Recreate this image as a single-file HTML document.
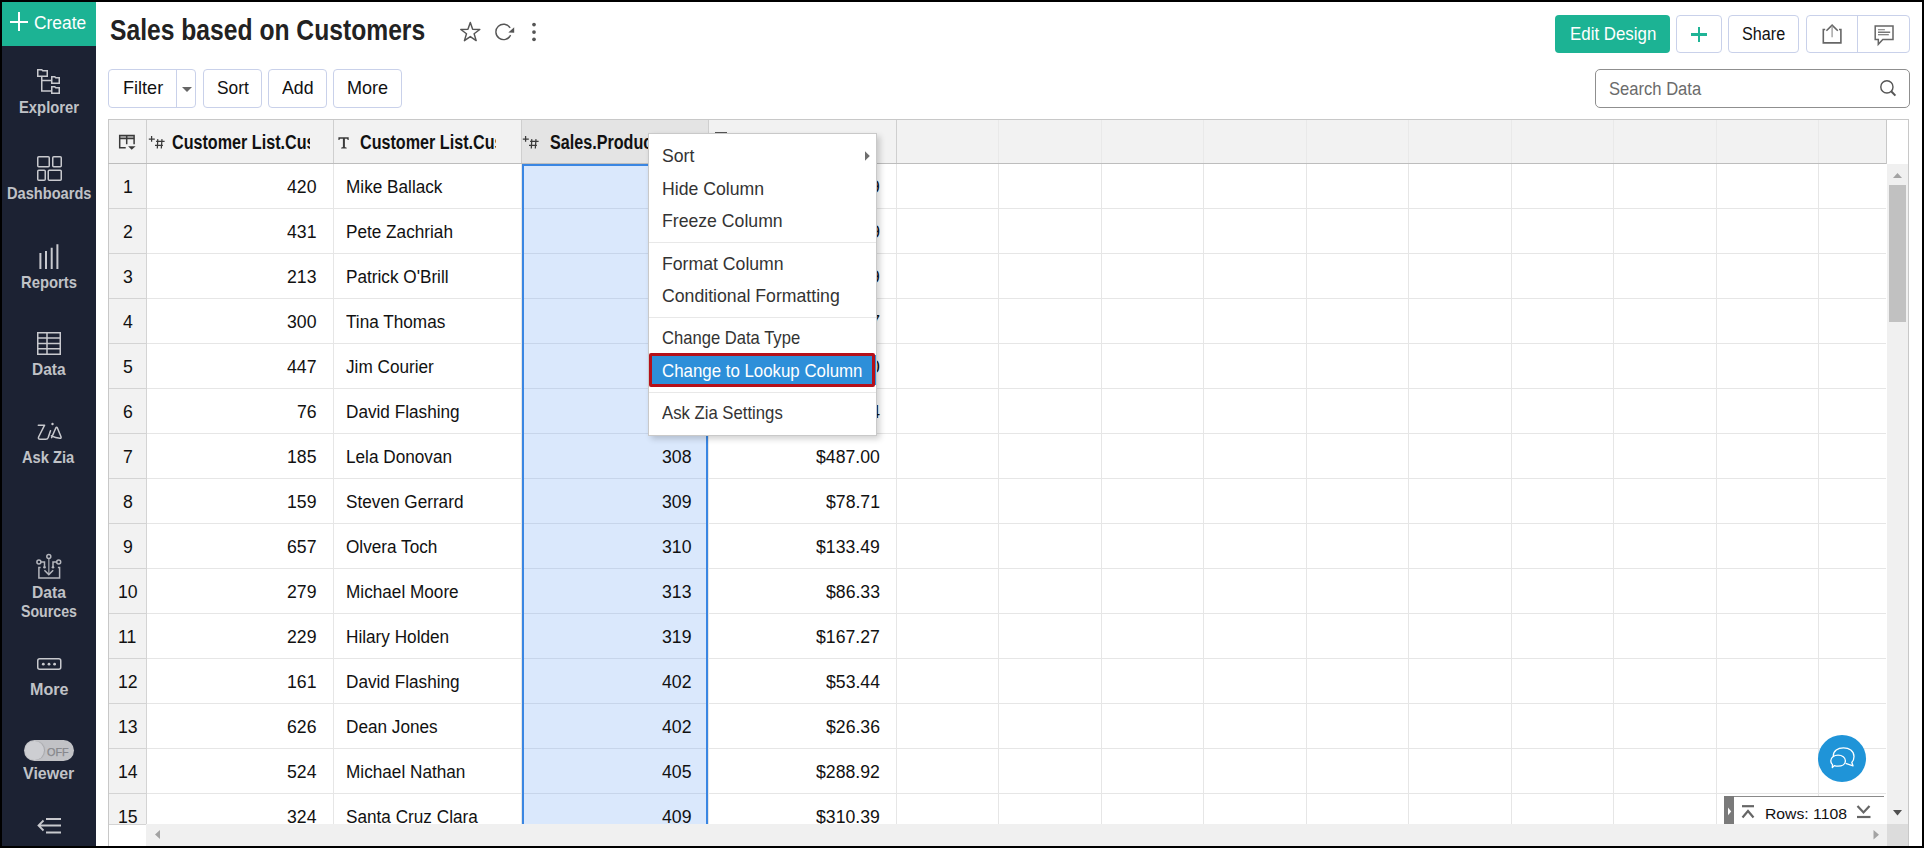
<!DOCTYPE html><html><head><meta charset="utf-8"><style>
html,body{margin:0;padding:0;}body{width:1924px;height:848px;position:relative;overflow:hidden;background:#fff;font-family:"Liberation Sans",sans-serif;}
.t{position:absolute;white-space:nowrap;transform-origin:0 0;}
</style></head><body>
<div style="position:absolute;left:0px;top:0px;width:96px;height:848px;background:#1c2233"></div>
<div style="position:absolute;left:2px;top:2px;width:94px;height:44px;background:#1cb394"></div>
<div style="position:absolute;left:10px;top:20.5px;width:18px;height:2px;background:#fff"></div>
<div style="position:absolute;left:18px;top:12px;width:2px;height:19px;background:#fff"></div>
<div class="t" style="left:33.60px;top:13.50px;font-size:18.90px;line-height:18.90px;color:#fff;transform:scaleX(0.9201);">Create</div>
<div class="t" style="left:18.90px;top:99.61px;font-size:15.70px;line-height:15.70px;color:#c0c2c7;font-weight:bold;transform:scaleX(0.9436);">Explorer</div>
<div class="t" style="left:6.80px;top:186.41px;font-size:15.70px;line-height:15.70px;color:#c0c2c7;font-weight:bold;transform:scaleX(0.9313);">Dashboards</div>
<div class="t" style="left:21.00px;top:274.91px;font-size:15.70px;line-height:15.70px;color:#c0c2c7;font-weight:bold;transform:scaleX(0.9444);">Reports</div>
<div class="t" style="left:32.00px;top:361.51px;font-size:15.70px;line-height:15.70px;color:#c0c2c7;font-weight:bold;transform:scaleX(0.9870);">Data</div>
<div class="t" style="left:22.30px;top:449.61px;font-size:15.70px;line-height:15.70px;color:#c0c2c7;font-weight:bold;transform:scaleX(0.9370);">Ask Zia</div>
<div class="t" style="left:32.00px;top:584.91px;font-size:15.70px;line-height:15.70px;color:#c0c2c7;font-weight:bold;transform:scaleX(0.9958);">Data</div>
<div class="t" style="left:21.00px;top:603.81px;font-size:15.70px;line-height:15.70px;color:#c0c2c7;font-weight:bold;transform:scaleX(0.9037);">Sources</div>
<div class="t" style="left:29.80px;top:681.61px;font-size:15.70px;line-height:15.70px;color:#c0c2c7;font-weight:bold;transform:scaleX(1.0262);">More</div>
<div class="t" style="left:23.40px;top:765.81px;font-size:15.70px;line-height:15.70px;color:#c0c2c7;font-weight:bold;transform:scaleX(1.0197);">Viewer</div>
<svg style="position:absolute;left:30px;top:60px;" width="40" height="40" viewBox="0 0 40 40"><g fill="none" stroke="#c8c9ce" stroke-width="1.5"><path d="M7.75 9.75h4l1 1h4.5v5.5h-9.5z"/><path d="M21.75 16.75h3l1 1h3.5v5.5h-7.5z"/><path d="M21.75 26.75h3l1 1h3.5v5.5h-7.5z"/><path d="M11.75 16.5v14.5h10M11.75 20.5h10"/></g></svg>
<svg style="position:absolute;left:30px;top:150px;" width="40" height="40" viewBox="0 0 40 40"><g fill="none" stroke="#c8c9ce" stroke-width="1.5"><rect x="7.75" y="6.75" width="11.5" height="10" rx="1"/><rect x="22.75" y="6.75" width="8.5" height="10" rx="1"/><rect x="7.75" y="20.25" width="7.5" height="10" rx="1"/><rect x="18.25" y="20.25" width="13" height="10" rx="1"/></g></svg>
<svg style="position:absolute;left:30px;top:236px;" width="40" height="40" viewBox="0 0 40 40"><g fill="none" stroke="#c8c9ce" stroke-width="2"><path d="M10.4 17v16M16 15v18M21.7 11.7v21.3M27.4 8.2v24.8"/></g></svg>
<svg style="position:absolute;left:30px;top:325px;" width="40" height="40" viewBox="0 0 40 40"><g fill="none" stroke="#c8c9ce" stroke-width="1.5"><rect x="7.75" y="7.75" width="22.5" height="21.5"/><path d="M17 7.75v21.5M7.75 13h22.5M7.75 18.5h22.5M7.75 23.75h22.5"/></g></svg>
<svg style="position:absolute;left:30px;top:415px;" width="40" height="40" viewBox="0 0 40 40"><g fill="none" stroke="#c8c9ce" stroke-width="1.5" stroke-linejoin="round" stroke-linecap="round"><path d="M8.3 10.2h6.3L8.6 22q-0.8 2.2 1.5 2.3h5.8q1.6 0 2.3-1.8l2.3-6.8"/><path d="M21.6 22.6l4.2-9.6q0.8-1.3 1.6 0l3.6 8.8q0.5 1.6-1.2 1.5q-4.2-0.4-8.4-2.4"/></g><circle cx="22.5" cy="9" r="1.2" fill="#c8c9ce"/></svg>
<svg style="position:absolute;left:30px;top:548px;" width="40" height="40" viewBox="0 0 40 40"><g fill="none" stroke="#b4b6bd" stroke-width="1.5"><path d="M10.6 19.6H8.9V30.1H29.6V19.6H27.9"/><path d="M18.8 10.6V26.4" stroke="#8d9099"/><path d="M14.4 22.3l4.4 4.3 4.4-4.3"/><circle cx="18.8" cy="8.6" r="2"/><circle cx="8.9" cy="14" r="2"/><circle cx="28.7" cy="14" r="2"/><path d="M10.9 14H14.5V18.8M26.7 14H23V18.8"/></g><circle cx="14.5" cy="19.3" r="1.3" fill="#b4b6bd"/><circle cx="23" cy="19.3" r="1.3" fill="#b4b6bd"/></svg>
<svg style="position:absolute;left:30px;top:650px;" width="40" height="40" viewBox="0 0 40 40"><g fill="none" stroke="#c8c9ce" stroke-width="1.5"><rect x="7.75" y="8.75" width="23" height="10.5" rx="2"/></g><circle cx="13.3" cy="14.2" r="1.4" fill="#c8c9ce"/><circle cx="19" cy="14.2" r="1.4" fill="#c8c9ce"/><circle cx="24.6" cy="14.2" r="1.4" fill="#c8c9ce"/></svg>
<div style="position:absolute;left:24px;top:740px;width:50px;height:20.5px;background:#c1c2c6;border-radius:11px"></div>
<div style="position:absolute;left:24.5px;top:740.5px;width:19px;height:19.5px;background:#cdced2;border-radius:50%;box-shadow:1px 0 1px rgba(0,0,0,0.15)"></div>
<div class="t" style="left:46.50px;top:746.97px;font-size:10.90px;line-height:10.90px;color:#86878c;transform:scaleX(0.9953);-webkit-text-stroke:0.25px #86878c;">OFF</div>
<svg style="position:absolute;left:30px;top:810px;" width="40" height="30" viewBox="0 0 40 30"><g fill="none" stroke="#c8c9ce" stroke-width="1.8"><path d="M16 9h15M9 15.5h22M16 22.5h15M13.5 10.5l-5 5 5 5"/></g></svg>
<div class="t" style="left:110.00px;top:14.95px;font-size:29.94px;line-height:29.94px;color:#222;font-weight:bold;transform:scaleX(0.8236);">Sales based on Customers</div>
<svg style="position:absolute;left:456px;top:18px;" width="30" height="28" viewBox="0 0 30 28"><path d="M14.30 4.55 L16.65 11.31 L23.81 11.46 L18.10 15.79 L20.18 22.64 L14.30 18.55 L8.42 22.64 L10.50 15.79 L4.79 11.46 L11.95 11.31z" fill="none" stroke="#555" stroke-width="1.45" stroke-linejoin="round"/></svg>
<svg style="position:absolute;left:490px;top:18px;" width="30" height="28" viewBox="0 0 30 28"><path d="M20.58 17.15A7.7 7.7 0 1 1 20.13 9.82" fill="none" stroke="#555" stroke-width="1.4"/><path d="M18.3 14.5L24.2 9.2V14.8z" fill="#555"/></svg>
<svg style="position:absolute;left:528px;top:20px;" width="12" height="24" viewBox="0 0 12 24"><circle cx="6" cy="4.6" r="1.85" fill="#555"/><circle cx="6" cy="12.1" r="1.85" fill="#555"/><circle cx="6" cy="19.3" r="1.85" fill="#555"/></svg>
<div style="position:absolute;left:1555px;top:15px;width:115px;height:38px;background:#1cb394;border-radius:4px;box-sizing:border-box"></div>
<div class="t" style="left:1569.80px;top:24.97px;font-size:18.46px;line-height:18.46px;color:#fff;transform:scaleX(0.9151);">Edit Design</div>
<div style="position:absolute;left:1676px;top:15px;width:46px;height:38px;border:1px solid #c9d1ea;border-radius:4px;box-sizing:border-box"></div>
<div style="position:absolute;left:1691px;top:33.3px;width:16px;height:2.4px;background:#1fb496"></div>
<div style="position:absolute;left:1697.8px;top:26.8px;width:2.4px;height:15px;background:#1fb496"></div>
<div style="position:absolute;left:1728px;top:15px;width:71px;height:38px;border:1px solid #c9d1ea;border-radius:4px;box-sizing:border-box"></div>
<div class="t" style="left:1742.10px;top:24.82px;font-size:18.75px;line-height:18.75px;color:#111;transform:scaleX(0.8637);">Share</div>
<div style="position:absolute;left:1806px;top:15px;width:104px;height:38px;border:1px solid #c9d1ea;border-radius:4px;box-sizing:border-box"></div>
<div style="position:absolute;left:1857px;top:15px;width:1px;height:38px;background:#c9d1ea"></div>
<svg style="position:absolute;left:1818px;top:20px;" width="28" height="28" viewBox="0 0 28 28"><g fill="none" stroke="#666" stroke-width="1.6"><path d="M7.2 9.5H5.3V22.9H22.9V9.5H21"/><path d="M8.4 10.8l5.7-5.6 5.7 5.6"/></g><path d="M14.1 5.8V17.3" stroke="#9a9a9a" stroke-width="1.3"/></svg>
<svg style="position:absolute;left:1870px;top:20px;" width="28" height="28" viewBox="0 0 28 28"><path d="M5.2 6.1H23V19.4H12.8L8.3 24.3V19.4H5.2z" fill="none" stroke="#666" stroke-width="1.5"/><path d="M8 9.7h6.9" stroke="#8a8a8a" stroke-width="1.2"/><path d="M8 12.2h12.2" stroke="#555" stroke-width="1.2"/><path d="M8 14.7h10.8" stroke="#777" stroke-width="1.2"/></svg>
<div style="position:absolute;left:108px;top:69px;width:88px;height:39px;border:1px solid #c9d1ea;border-radius:4px;box-sizing:border-box"></div>
<div class="t" style="left:122.60px;top:78.65px;font-size:18.60px;line-height:18.60px;color:#111;transform:scaleX(0.9722);">Filter</div>
<div style="position:absolute;left:176px;top:69px;width:1px;height:39px;background:#c9d1ea"></div>
<svg style="position:absolute;left:180px;top:84px;" width="14" height="10" viewBox="0 0 14 10"><path d="M2 3h10l-5 5z" fill="#666"/></svg>
<div style="position:absolute;left:203px;top:69px;width:59px;height:39px;border:1px solid #c9d1ea;border-radius:4px;box-sizing:border-box"></div>
<div class="t" style="left:216.80px;top:78.65px;font-size:18.60px;line-height:18.60px;color:#111;transform:scaleX(0.9315);">Sort</div>
<div style="position:absolute;left:268px;top:69px;width:59px;height:39px;border:1px solid #c9d1ea;border-radius:4px;box-sizing:border-box"></div>
<div class="t" style="left:282.00px;top:78.65px;font-size:18.60px;line-height:18.60px;color:#111;transform:scaleX(0.9512);">Add</div>
<div style="position:absolute;left:333px;top:69px;width:69px;height:39px;border:1px solid #c9d1ea;border-radius:4px;box-sizing:border-box"></div>
<div class="t" style="left:347.30px;top:78.65px;font-size:18.60px;line-height:18.60px;color:#111;transform:scaleX(0.9700);">More</div>
<div style="position:absolute;left:1595px;top:69px;width:315px;height:39px;border:1px solid #8f8f8f;border-radius:5px;box-sizing:border-box"></div>
<div class="t" style="left:1608.90px;top:79.87px;font-size:18.46px;line-height:18.46px;color:#6b6b6b;transform:scaleX(0.8993);">Search Data</div>
<svg style="position:absolute;left:1876px;top:76px;" width="24" height="24" viewBox="0 0 24 24"><circle cx="10.9" cy="10.9" r="6.1" fill="none" stroke="#555" stroke-width="1.4"/><path d="M15.2 15.2l4.2 4.4" stroke="#555" stroke-width="2"/></svg>
<div style="position:absolute;left:109px;top:120px;width:1777px;height:43px;background:#f2f2f2"></div>
<div style="position:absolute;left:522px;top:120px;width:186px;height:43px;background:#e4e4e4"></div>
<div style="position:absolute;left:108px;top:119px;width:1801px;height:1px;background:#c8c8c8"></div>
<div style="position:absolute;left:108px;top:119px;width:1px;height:729px;background:#c8c8c8"></div>
<div style="position:absolute;left:1908px;top:119px;width:1px;height:705px;background:#c8c8c8"></div>
<div style="position:absolute;left:108px;top:163px;width:1778px;height:1px;background:#bdbdbd"></div>
<div style="position:absolute;left:1886px;top:119px;width:1px;height:45px;background:#c8c8c8"></div>
<div style="position:absolute;left:109px;top:164px;width:37px;height:660px;background:#f2f2f2"></div>
<div style="position:absolute;left:522px;top:164px;width:186px;height:660px;background:#dae8fc"></div>
<div style="position:absolute;left:109px;top:208px;width:1777px;height:1px;background:#e6e6e6"></div>
<div style="position:absolute;left:109px;top:208px;width:37px;height:1px;background:#d4d4d4"></div>
<div style="position:absolute;left:524px;top:208px;width:182px;height:1px;background:#c7d5ea"></div>
<div style="position:absolute;left:109px;top:253px;width:1777px;height:1px;background:#e6e6e6"></div>
<div style="position:absolute;left:109px;top:253px;width:37px;height:1px;background:#d4d4d4"></div>
<div style="position:absolute;left:524px;top:253px;width:182px;height:1px;background:#c7d5ea"></div>
<div style="position:absolute;left:109px;top:298px;width:1777px;height:1px;background:#e6e6e6"></div>
<div style="position:absolute;left:109px;top:298px;width:37px;height:1px;background:#d4d4d4"></div>
<div style="position:absolute;left:524px;top:298px;width:182px;height:1px;background:#c7d5ea"></div>
<div style="position:absolute;left:109px;top:343px;width:1777px;height:1px;background:#e6e6e6"></div>
<div style="position:absolute;left:109px;top:343px;width:37px;height:1px;background:#d4d4d4"></div>
<div style="position:absolute;left:524px;top:343px;width:182px;height:1px;background:#c7d5ea"></div>
<div style="position:absolute;left:109px;top:388px;width:1777px;height:1px;background:#e6e6e6"></div>
<div style="position:absolute;left:109px;top:388px;width:37px;height:1px;background:#d4d4d4"></div>
<div style="position:absolute;left:524px;top:388px;width:182px;height:1px;background:#c7d5ea"></div>
<div style="position:absolute;left:109px;top:433px;width:1777px;height:1px;background:#e6e6e6"></div>
<div style="position:absolute;left:109px;top:433px;width:37px;height:1px;background:#d4d4d4"></div>
<div style="position:absolute;left:524px;top:433px;width:182px;height:1px;background:#c7d5ea"></div>
<div style="position:absolute;left:109px;top:478px;width:1777px;height:1px;background:#e6e6e6"></div>
<div style="position:absolute;left:109px;top:478px;width:37px;height:1px;background:#d4d4d4"></div>
<div style="position:absolute;left:524px;top:478px;width:182px;height:1px;background:#c7d5ea"></div>
<div style="position:absolute;left:109px;top:523px;width:1777px;height:1px;background:#e6e6e6"></div>
<div style="position:absolute;left:109px;top:523px;width:37px;height:1px;background:#d4d4d4"></div>
<div style="position:absolute;left:524px;top:523px;width:182px;height:1px;background:#c7d5ea"></div>
<div style="position:absolute;left:109px;top:568px;width:1777px;height:1px;background:#e6e6e6"></div>
<div style="position:absolute;left:109px;top:568px;width:37px;height:1px;background:#d4d4d4"></div>
<div style="position:absolute;left:524px;top:568px;width:182px;height:1px;background:#c7d5ea"></div>
<div style="position:absolute;left:109px;top:613px;width:1777px;height:1px;background:#e6e6e6"></div>
<div style="position:absolute;left:109px;top:613px;width:37px;height:1px;background:#d4d4d4"></div>
<div style="position:absolute;left:524px;top:613px;width:182px;height:1px;background:#c7d5ea"></div>
<div style="position:absolute;left:109px;top:658px;width:1777px;height:1px;background:#e6e6e6"></div>
<div style="position:absolute;left:109px;top:658px;width:37px;height:1px;background:#d4d4d4"></div>
<div style="position:absolute;left:524px;top:658px;width:182px;height:1px;background:#c7d5ea"></div>
<div style="position:absolute;left:109px;top:703px;width:1777px;height:1px;background:#e6e6e6"></div>
<div style="position:absolute;left:109px;top:703px;width:37px;height:1px;background:#d4d4d4"></div>
<div style="position:absolute;left:524px;top:703px;width:182px;height:1px;background:#c7d5ea"></div>
<div style="position:absolute;left:109px;top:748px;width:1777px;height:1px;background:#e6e6e6"></div>
<div style="position:absolute;left:109px;top:748px;width:37px;height:1px;background:#d4d4d4"></div>
<div style="position:absolute;left:524px;top:748px;width:182px;height:1px;background:#c7d5ea"></div>
<div style="position:absolute;left:109px;top:793px;width:1777px;height:1px;background:#e6e6e6"></div>
<div style="position:absolute;left:109px;top:793px;width:37px;height:1px;background:#d4d4d4"></div>
<div style="position:absolute;left:524px;top:793px;width:182px;height:1px;background:#c7d5ea"></div>
<div style="position:absolute;left:109px;top:824px;width:37px;height:1px;background:#d4d4d4"></div>
<div style="position:absolute;left:146px;top:120px;width:1px;height:43px;background:#cfcfcf"></div>
<div style="position:absolute;left:333px;top:120px;width:1px;height:43px;background:#cfcfcf"></div>
<div style="position:absolute;left:521px;top:120px;width:1px;height:43px;background:#cfcfcf"></div>
<div style="position:absolute;left:708px;top:120px;width:1px;height:43px;background:#cfcfcf"></div>
<div style="position:absolute;left:896px;top:120px;width:1px;height:43px;background:#cfcfcf"></div>
<div style="position:absolute;left:998px;top:120px;width:1px;height:43px;background:#e9e9e9"></div>
<div style="position:absolute;left:1101px;top:120px;width:1px;height:43px;background:#e9e9e9"></div>
<div style="position:absolute;left:1203px;top:120px;width:1px;height:43px;background:#e9e9e9"></div>
<div style="position:absolute;left:1306px;top:120px;width:1px;height:43px;background:#e9e9e9"></div>
<div style="position:absolute;left:1408px;top:120px;width:1px;height:43px;background:#e9e9e9"></div>
<div style="position:absolute;left:1511px;top:120px;width:1px;height:43px;background:#e9e9e9"></div>
<div style="position:absolute;left:1613px;top:120px;width:1px;height:43px;background:#e9e9e9"></div>
<div style="position:absolute;left:1716px;top:120px;width:1px;height:43px;background:#e9e9e9"></div>
<div style="position:absolute;left:1818px;top:120px;width:1px;height:43px;background:#e9e9e9"></div>
<div style="position:absolute;left:146px;top:164px;width:1px;height:660px;background:#d4d4d4"></div>
<div style="position:absolute;left:333px;top:164px;width:1px;height:660px;background:#e6e6e6"></div>
<div style="position:absolute;left:521px;top:164px;width:1px;height:660px;background:#e6e6e6"></div>
<div style="position:absolute;left:708px;top:164px;width:1px;height:660px;background:#e6e6e6"></div>
<div style="position:absolute;left:896px;top:164px;width:1px;height:660px;background:#e6e6e6"></div>
<div style="position:absolute;left:998px;top:164px;width:1px;height:660px;background:#e6e6e6"></div>
<div style="position:absolute;left:1101px;top:164px;width:1px;height:660px;background:#e6e6e6"></div>
<div style="position:absolute;left:1203px;top:164px;width:1px;height:660px;background:#e6e6e6"></div>
<div style="position:absolute;left:1306px;top:164px;width:1px;height:660px;background:#e6e6e6"></div>
<div style="position:absolute;left:1408px;top:164px;width:1px;height:660px;background:#e6e6e6"></div>
<div style="position:absolute;left:1511px;top:164px;width:1px;height:660px;background:#e6e6e6"></div>
<div style="position:absolute;left:1613px;top:164px;width:1px;height:660px;background:#e6e6e6"></div>
<div style="position:absolute;left:1716px;top:164px;width:1px;height:660px;background:#e6e6e6"></div>
<div style="position:absolute;left:1818px;top:164px;width:1px;height:660px;background:#e6e6e6"></div>
<div style="position:absolute;left:522px;top:164px;width:186px;height:2px;background:#3a86e2"></div>
<div style="position:absolute;left:522px;top:164px;width:2px;height:660px;background:#3a86e2"></div>
<div style="position:absolute;left:706px;top:164px;width:2px;height:660px;background:#3a86e2"></div>
<svg style="position:absolute;left:115px;top:130px;" width="24" height="24" viewBox="0 0 24 24"><rect x="4.7" y="5.4" width="14.4" height="3" fill="#bbb"/><g fill="none" stroke="#3a3a3a" stroke-width="1.5"><path d="M4.7 18.5V5.4H19.1V14.2M4.7 8.4H19.1M11.7 5.4V14.2M4.7 17.8H10.7"/></g><path d="M13.1 16.2h7.5l-3.9 3.5z" fill="#3a3a3a"/></svg>
<svg style="position:absolute;left:148px;top:133px;" width="20" height="20" viewBox="0 0 20 20"><g stroke="#3a3a3a" stroke-width="1.25" fill="none"><path d="M0.8 6.1h6M3.6 3v5.7"/><path d="M8.1 8.4h8.5M7 12.4h7.9M9.8 6.1l-0.5 9.4M14 6.1l-0.7 9.4"/></g></svg>
<svg style="position:absolute;left:336px;top:133px;" width="16" height="20" viewBox="0 0 16 20"><path d="M2.4 4.3h10.3v2.8h-0.9l-0.8-1.4H8.9v8.4l1.8 0.6v0.8H5.1v-0.8l1.8-0.6V5.7H4.1l-0.8 1.4H2.4z" fill="#3a3a3a"/></svg>
<svg style="position:absolute;left:522px;top:133px;" width="20" height="20" viewBox="0 0 20 20"><g stroke="#3a3a3a" stroke-width="1.25" fill="none"><path d="M0.8 6.1h6M3.6 3v5.7"/><path d="M8.1 8.4h8.5M7 12.4h7.9M9.8 6.1l-0.5 9.4M14 6.1l-0.7 9.4"/></g></svg>
<div style="position:absolute;left:170px;top:120px;width:139.5px;height:43px;overflow:hidden">
<div style="position:absolute;left:-170px;top:-120px;width:1924px;height:848px">
<div class="t" style="left:172.00px;top:132.83px;font-size:19.33px;line-height:19.33px;color:#111;font-weight:bold;transform:scaleX(0.8350);">Customer List.Customer ID</div>
</div>
</div>
<div style="position:absolute;left:357.8px;top:120px;width:138.7px;height:43px;overflow:hidden">
<div style="position:absolute;left:-357.8px;top:-120px;width:1924px;height:848px">
<div class="t" style="left:359.80px;top:132.83px;font-size:19.33px;line-height:19.33px;color:#111;font-weight:bold;transform:scaleX(0.8350);">Customer List.Customer Name</div>
</div>
</div>
<div style="position:absolute;left:548px;top:120px;width:136px;height:43px;overflow:hidden">
<div style="position:absolute;left:-548px;top:-120px;width:1924px;height:848px">
<div class="t" style="left:550.00px;top:132.83px;font-size:19.33px;line-height:19.33px;color:#111;font-weight:bold;transform:scaleX(0.8350);">Sales.Product ID</div>
</div>
</div>
<div style="position:absolute;left:0;top:0;width:1924px;height:824px;overflow:hidden">
<div class="t" style="left:122.70px;top:177.60px;font-size:18.90px;line-height:18.90px;color:#111;transform:scaleX(0.9347);">1</div>
<div class="t" style="left:287.35px;top:177.60px;font-size:18.90px;line-height:18.90px;color:#111;transform:scaleX(0.9347);">420</div>
<div class="t" style="left:346.30px;top:177.60px;font-size:18.90px;line-height:18.90px;color:#111;transform:scaleX(0.9095);">Mike Ballack</div>
<div class="t" style="left:815.66px;top:177.60px;font-size:18.90px;line-height:18.90px;color:#111;transform:scaleX(0.9347);">$105.29</div>
<div class="t" style="left:122.70px;top:222.60px;font-size:18.90px;line-height:18.90px;color:#111;transform:scaleX(0.9347);">2</div>
<div class="t" style="left:287.35px;top:222.60px;font-size:18.90px;line-height:18.90px;color:#111;transform:scaleX(0.9347);">431</div>
<div class="t" style="left:346.30px;top:222.60px;font-size:18.90px;line-height:18.90px;color:#111;transform:scaleX(0.9095);">Pete Zachriah</div>
<div class="t" style="left:825.50px;top:222.60px;font-size:18.90px;line-height:18.90px;color:#111;transform:scaleX(0.9347);">$93.19</div>
<div class="t" style="left:122.70px;top:267.60px;font-size:18.90px;line-height:18.90px;color:#111;transform:scaleX(0.9347);">3</div>
<div class="t" style="left:287.35px;top:267.60px;font-size:18.90px;line-height:18.90px;color:#111;transform:scaleX(0.9347);">213</div>
<div class="t" style="left:346.30px;top:267.60px;font-size:18.90px;line-height:18.90px;color:#111;transform:scaleX(0.9095);">Patrick O'Brill</div>
<div class="t" style="left:815.66px;top:267.60px;font-size:18.90px;line-height:18.90px;color:#111;transform:scaleX(0.9347);">$240.99</div>
<div class="t" style="left:122.70px;top:312.60px;font-size:18.90px;line-height:18.90px;color:#111;transform:scaleX(0.9347);">4</div>
<div class="t" style="left:287.35px;top:312.60px;font-size:18.90px;line-height:18.90px;color:#111;transform:scaleX(0.9347);">300</div>
<div class="t" style="left:346.30px;top:312.60px;font-size:18.90px;line-height:18.90px;color:#111;transform:scaleX(0.9095);">Tina Thomas</div>
<div class="t" style="left:825.50px;top:312.60px;font-size:18.90px;line-height:18.90px;color:#111;transform:scaleX(0.9347);">$61.87</div>
<div class="t" style="left:122.70px;top:357.60px;font-size:18.90px;line-height:18.90px;color:#111;transform:scaleX(0.9347);">5</div>
<div class="t" style="left:287.35px;top:357.60px;font-size:18.90px;line-height:18.90px;color:#111;transform:scaleX(0.9347);">447</div>
<div class="t" style="left:346.30px;top:357.60px;font-size:18.90px;line-height:18.90px;color:#111;transform:scaleX(0.9095);">Jim Courier</div>
<div class="t" style="left:815.66px;top:357.60px;font-size:18.90px;line-height:18.90px;color:#111;transform:scaleX(0.9347);">$180.50</div>
<div class="t" style="left:122.70px;top:402.60px;font-size:18.90px;line-height:18.90px;color:#111;transform:scaleX(0.9347);">6</div>
<div class="t" style="left:297.15px;top:402.60px;font-size:18.90px;line-height:18.90px;color:#111;transform:scaleX(0.9347);">76</div>
<div class="t" style="left:346.30px;top:402.60px;font-size:18.90px;line-height:18.90px;color:#111;transform:scaleX(0.9095);">David Flashing</div>
<div class="t" style="left:825.50px;top:402.60px;font-size:18.90px;line-height:18.90px;color:#111;transform:scaleX(0.9347);">$72.64</div>
<div class="t" style="left:122.70px;top:447.60px;font-size:18.90px;line-height:18.90px;color:#111;transform:scaleX(0.9347);">7</div>
<div class="t" style="left:287.35px;top:447.60px;font-size:18.90px;line-height:18.90px;color:#111;transform:scaleX(0.9347);">185</div>
<div class="t" style="left:346.30px;top:447.60px;font-size:18.90px;line-height:18.90px;color:#111;transform:scaleX(0.9095);">Lela Donovan</div>
<div class="t" style="left:662.25px;top:447.60px;font-size:18.90px;line-height:18.90px;color:#111;transform:scaleX(0.9347);">308</div>
<div class="t" style="left:815.66px;top:447.60px;font-size:18.90px;line-height:18.90px;color:#111;transform:scaleX(0.9347);">$487.00</div>
<div class="t" style="left:122.70px;top:492.60px;font-size:18.90px;line-height:18.90px;color:#111;transform:scaleX(0.9347);">8</div>
<div class="t" style="left:287.35px;top:492.60px;font-size:18.90px;line-height:18.90px;color:#111;transform:scaleX(0.9347);">159</div>
<div class="t" style="left:346.30px;top:492.60px;font-size:18.90px;line-height:18.90px;color:#111;transform:scaleX(0.9095);">Steven Gerrard</div>
<div class="t" style="left:662.25px;top:492.60px;font-size:18.90px;line-height:18.90px;color:#111;transform:scaleX(0.9347);">309</div>
<div class="t" style="left:825.50px;top:492.60px;font-size:18.90px;line-height:18.90px;color:#111;transform:scaleX(0.9347);">$78.71</div>
<div class="t" style="left:122.70px;top:537.60px;font-size:18.90px;line-height:18.90px;color:#111;transform:scaleX(0.9347);">9</div>
<div class="t" style="left:287.35px;top:537.60px;font-size:18.90px;line-height:18.90px;color:#111;transform:scaleX(0.9347);">657</div>
<div class="t" style="left:346.30px;top:537.60px;font-size:18.90px;line-height:18.90px;color:#111;transform:scaleX(0.9095);">Olvera Toch</div>
<div class="t" style="left:662.25px;top:537.60px;font-size:18.90px;line-height:18.90px;color:#111;transform:scaleX(0.9347);">310</div>
<div class="t" style="left:815.66px;top:537.60px;font-size:18.90px;line-height:18.90px;color:#111;transform:scaleX(0.9347);">$133.49</div>
<div class="t" style="left:117.78px;top:582.60px;font-size:18.90px;line-height:18.90px;color:#111;transform:scaleX(0.9347);">10</div>
<div class="t" style="left:287.35px;top:582.60px;font-size:18.90px;line-height:18.90px;color:#111;transform:scaleX(0.9347);">279</div>
<div class="t" style="left:346.30px;top:582.60px;font-size:18.90px;line-height:18.90px;color:#111;transform:scaleX(0.9095);">Michael Moore</div>
<div class="t" style="left:662.25px;top:582.60px;font-size:18.90px;line-height:18.90px;color:#111;transform:scaleX(0.9347);">313</div>
<div class="t" style="left:825.50px;top:582.60px;font-size:18.90px;line-height:18.90px;color:#111;transform:scaleX(0.9347);">$86.33</div>
<div class="t" style="left:118.44px;top:627.60px;font-size:18.90px;line-height:18.90px;color:#111;transform:scaleX(0.9347);">11</div>
<div class="t" style="left:287.35px;top:627.60px;font-size:18.90px;line-height:18.90px;color:#111;transform:scaleX(0.9347);">229</div>
<div class="t" style="left:346.30px;top:627.60px;font-size:18.90px;line-height:18.90px;color:#111;transform:scaleX(0.9095);">Hilary Holden</div>
<div class="t" style="left:662.25px;top:627.60px;font-size:18.90px;line-height:18.90px;color:#111;transform:scaleX(0.9347);">319</div>
<div class="t" style="left:815.66px;top:627.60px;font-size:18.90px;line-height:18.90px;color:#111;transform:scaleX(0.9347);">$167.27</div>
<div class="t" style="left:117.78px;top:672.60px;font-size:18.90px;line-height:18.90px;color:#111;transform:scaleX(0.9347);">12</div>
<div class="t" style="left:287.35px;top:672.60px;font-size:18.90px;line-height:18.90px;color:#111;transform:scaleX(0.9347);">161</div>
<div class="t" style="left:346.30px;top:672.60px;font-size:18.90px;line-height:18.90px;color:#111;transform:scaleX(0.9095);">David Flashing</div>
<div class="t" style="left:662.25px;top:672.60px;font-size:18.90px;line-height:18.90px;color:#111;transform:scaleX(0.9347);">402</div>
<div class="t" style="left:825.50px;top:672.60px;font-size:18.90px;line-height:18.90px;color:#111;transform:scaleX(0.9347);">$53.44</div>
<div class="t" style="left:117.78px;top:717.60px;font-size:18.90px;line-height:18.90px;color:#111;transform:scaleX(0.9347);">13</div>
<div class="t" style="left:287.35px;top:717.60px;font-size:18.90px;line-height:18.90px;color:#111;transform:scaleX(0.9347);">626</div>
<div class="t" style="left:346.30px;top:717.60px;font-size:18.90px;line-height:18.90px;color:#111;transform:scaleX(0.9095);">Dean Jones</div>
<div class="t" style="left:662.25px;top:717.60px;font-size:18.90px;line-height:18.90px;color:#111;transform:scaleX(0.9347);">402</div>
<div class="t" style="left:825.50px;top:717.60px;font-size:18.90px;line-height:18.90px;color:#111;transform:scaleX(0.9347);">$26.36</div>
<div class="t" style="left:117.78px;top:762.60px;font-size:18.90px;line-height:18.90px;color:#111;transform:scaleX(0.9347);">14</div>
<div class="t" style="left:287.35px;top:762.60px;font-size:18.90px;line-height:18.90px;color:#111;transform:scaleX(0.9347);">524</div>
<div class="t" style="left:346.30px;top:762.60px;font-size:18.90px;line-height:18.90px;color:#111;transform:scaleX(0.9095);">Michael Nathan</div>
<div class="t" style="left:662.25px;top:762.60px;font-size:18.90px;line-height:18.90px;color:#111;transform:scaleX(0.9347);">405</div>
<div class="t" style="left:815.66px;top:762.60px;font-size:18.90px;line-height:18.90px;color:#111;transform:scaleX(0.9347);">$288.92</div>
<div class="t" style="left:117.78px;top:807.60px;font-size:18.90px;line-height:18.90px;color:#111;transform:scaleX(0.9347);">15</div>
<div class="t" style="left:287.35px;top:807.60px;font-size:18.90px;line-height:18.90px;color:#111;transform:scaleX(0.9347);">324</div>
<div class="t" style="left:346.30px;top:807.60px;font-size:18.90px;line-height:18.90px;color:#111;transform:scaleX(0.9095);">Santa Cruz Clara</div>
<div class="t" style="left:662.25px;top:807.60px;font-size:18.90px;line-height:18.90px;color:#111;transform:scaleX(0.9347);">409</div>
<div class="t" style="left:815.66px;top:807.60px;font-size:18.90px;line-height:18.90px;color:#111;transform:scaleX(0.9347);">$310.39</div>
</div>
<div style="position:absolute;left:1887px;top:164px;width:21px;height:660px;background:#f0f0f0"></div>
<div style="position:absolute;left:1889px;top:185px;width:17px;height:137px;background:#c1c1c1"></div>
<svg style="position:absolute;left:1887px;top:164px;" width="21" height="20" viewBox="0 0 21 20"><path d="M6 14h9l-4.5-5z" fill="#a3a3a3"/></svg>
<svg style="position:absolute;left:1887px;top:800px;" width="21" height="24" viewBox="0 0 21 24"><path d="M6 10h9l-4.5 5.5z" fill="#505050"/></svg>
<div style="position:absolute;left:1887px;top:824px;width:21px;height:22px;background:#dcdcdc"></div>
<div style="position:absolute;left:1908px;top:824px;width:1px;height:22px;background:#c8c8c8"></div>
<div style="position:absolute;left:146px;top:824px;width:1741px;height:22px;background:#f0f0f0"></div>
<svg style="position:absolute;left:150px;top:826px;" width="14" height="18" viewBox="0 0 14 18"><path d="M10 4v9l-5-4.5z" fill="#a3a3a3"/></svg>
<svg style="position:absolute;left:1869px;top:826px;" width="14" height="18" viewBox="0 0 14 18"><path d="M4.5 4v9.5l5.5-4.75z" fill="#a3a3a3"/></svg>
<div style="position:absolute;left:1734px;top:796px;width:150px;height:28px;background:#fff"></div>
<div style="position:absolute;left:1734px;top:796px;width:150px;height:1.2px;background:#8a8a8a"></div>
<div style="position:absolute;left:1724px;top:796px;width:10px;height:28px;background:#7a7a7a"></div>
<svg style="position:absolute;left:1724px;top:799px;" width="10" height="20" viewBox="0 0 10 20"><path d="M4 8.6v7.6l3.2-3.8z" fill="#fff"/></svg>
<svg style="position:absolute;left:1738px;top:800px;" width="20" height="22" viewBox="0 0 20 22"><g stroke="#666" stroke-width="2.2" fill="none"><path d="M4 6.2h12"/><path d="M4.5 17.5l5.5-6.5 5.5 6.5"/></g></svg>
<svg style="position:absolute;left:1853px;top:800px;" width="22" height="22" viewBox="0 0 22 22"><g stroke="#666" stroke-width="2.2" fill="none"><path d="M4 17h13.5"/><path d="M4.5 6l6 6.5 6-6.5"/></g></svg>
<div class="t" style="left:1765.00px;top:806.43px;font-size:15.55px;line-height:15.55px;color:#111;transform:scaleX(1.0125);">Rows: 1108</div>
<div style="position:absolute;left:1818px;top:735px;width:48px;height:47px;background:#1f94d8;border-radius:50%"></div>
<svg style="position:absolute;left:1818px;top:735px;" width="48" height="47" viewBox="0 0 48 47"><g fill="none" stroke="#fff" stroke-width="1.3" stroke-linejoin="round"><path d="M15.3 21.5C15 15.5 20 12.8 25.5 12.8S36 15.8 36 21.5C36 24.3 35 26.2 33.8 27.5L35 30.8 27.6 28.3"/><path d="M12.8 25.8C12.8 22.5 16 20.2 20.1 20.2S27.4 22.5 27.4 25.8 24.2 31.2 20.1 31.2C18.6 31.2 17.4 31 16.3 30.6L14.3 32.6 14.5 29.6C13.4 28.6 12.8 27.3 12.8 25.8Z" fill="#1f94d8"/></g></svg>
<div style="position:absolute;left:715px;top:132px;width:12px;height:1.6px;background:#555"></div>
<div style="position:absolute;left:648px;top:133px;width:229px;height:303px;background:#fff;border:1px solid #c9c9c9;box-sizing:border-box;box-shadow:3px 3px 6px rgba(0,0,0,0.18)"></div>
<div class="t" style="left:662.20px;top:147.15px;font-size:18.60px;line-height:18.60px;color:#333;transform:scaleX(0.9494);">Sort</div>
<svg style="position:absolute;left:858px;top:148px;" width="14" height="16" viewBox="0 0 14 16"><path d="M7 3.3v9.4l4.8-4.7z" fill="#6e6e6e"/></svg>
<div class="t" style="left:662.20px;top:180.15px;font-size:18.60px;line-height:18.60px;color:#333;transform:scaleX(0.9494);">Hide Column</div>
<div class="t" style="left:662.20px;top:212.15px;font-size:18.60px;line-height:18.60px;color:#333;transform:scaleX(0.9494);">Freeze Column</div>
<div style="position:absolute;left:649px;top:242px;width:227px;height:1px;background:#e8e8e8"></div>
<div class="t" style="left:662.20px;top:254.95px;font-size:18.60px;line-height:18.60px;color:#333;transform:scaleX(0.9494);">Format Column</div>
<div class="t" style="left:662.20px;top:287.15px;font-size:18.60px;line-height:18.60px;color:#333;transform:scaleX(0.9500);">Conditional Formatting</div>
<div style="position:absolute;left:649px;top:317px;width:227px;height:1px;background:#e8e8e8"></div>
<div class="t" style="left:662.20px;top:329.25px;font-size:18.60px;line-height:18.60px;color:#333;transform:scaleX(0.8928);">Change Data Type</div>
<div style="position:absolute;left:874px;top:355px;width:2px;height:30px;background:#2d8fd9"></div>
<div style="position:absolute;left:649px;top:353px;width:226px;height:34px;background:#b5101a;border-radius:2px"></div>
<div style="position:absolute;left:652px;top:356px;width:220px;height:28px;background:#2d8fd9"></div>
<div class="t" style="left:662.20px;top:362.05px;font-size:18.60px;line-height:18.60px;color:#fff;transform:scaleX(0.9063);">Change to Lookup Column</div>
<div style="position:absolute;left:649px;top:392px;width:227px;height:1px;background:#e8e8e8"></div>
<div class="t" style="left:662.20px;top:404.15px;font-size:18.60px;line-height:18.60px;color:#333;transform:scaleX(0.8987);">Ask Zia Settings</div>
<div style="position:absolute;left:0px;top:0px;width:1924px;height:2px;background:#000"></div>
<div style="position:absolute;left:0px;top:846px;width:1924px;height:2px;background:#000"></div>
<div style="position:absolute;left:0px;top:0px;width:2px;height:848px;background:#000"></div>
<div style="position:absolute;left:1922px;top:0px;width:2px;height:848px;background:#000"></div>
</body></html>
